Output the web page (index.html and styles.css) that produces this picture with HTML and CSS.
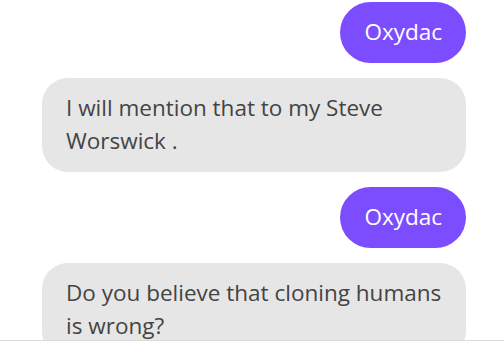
FILE: index.html
```html
<!DOCTYPE html>
<html>
<head>
<meta charset="utf-8">
<link rel="stylesheet" href="styles.css">
</head>
<body>
<div class="chat">
  <div class="messages">
    <div class="msg sent">Oxydac</div>
    <div class="msg received">I will mention that to my Steve Worswick .</div>
    <div class="msg sent">Oxydac</div>
    <div class="msg received">Do you believe that cloning humans is wrong?</div>
  </div>
  <div class="footer"></div>
</div>
</body>
</html>
```

FILE: styles.css
```css
html, body {
  margin: 0;
  padding: 0;
  background: #ffffff;
}
body {
  font-family: "Open Sans", "Liberation Sans", sans-serif;
  width: 504px;
  height: 342px;
  overflow: hidden;
}
.chat {
  display: flex;
  flex-direction: column;
  height: 342px;
}
.messages {
  height: 340px;
  overflow: hidden;
  display: flex;
  flex-direction: column;
  gap: 15px;
  padding: 2px 38px 0 42px;
  box-sizing: border-box;
}
.msg {
  flex: none;
  font-size: 22.5px;
  line-height: 33px;
  padding: 13px 24px 15px;
  box-sizing: border-box;
}
.sent {
  align-self: flex-end;
  background: #7c4dff;
  color: #ffffff;
  border-radius: 31px;
}
.received {
  align-self: flex-start;
  width: 424px;
  background: #e6e6e6;
  color: #444444;
  border-radius: 26px;
}
.footer {
  border-top: 1px solid #dcdcdc;
  flex: 1;
}
```
